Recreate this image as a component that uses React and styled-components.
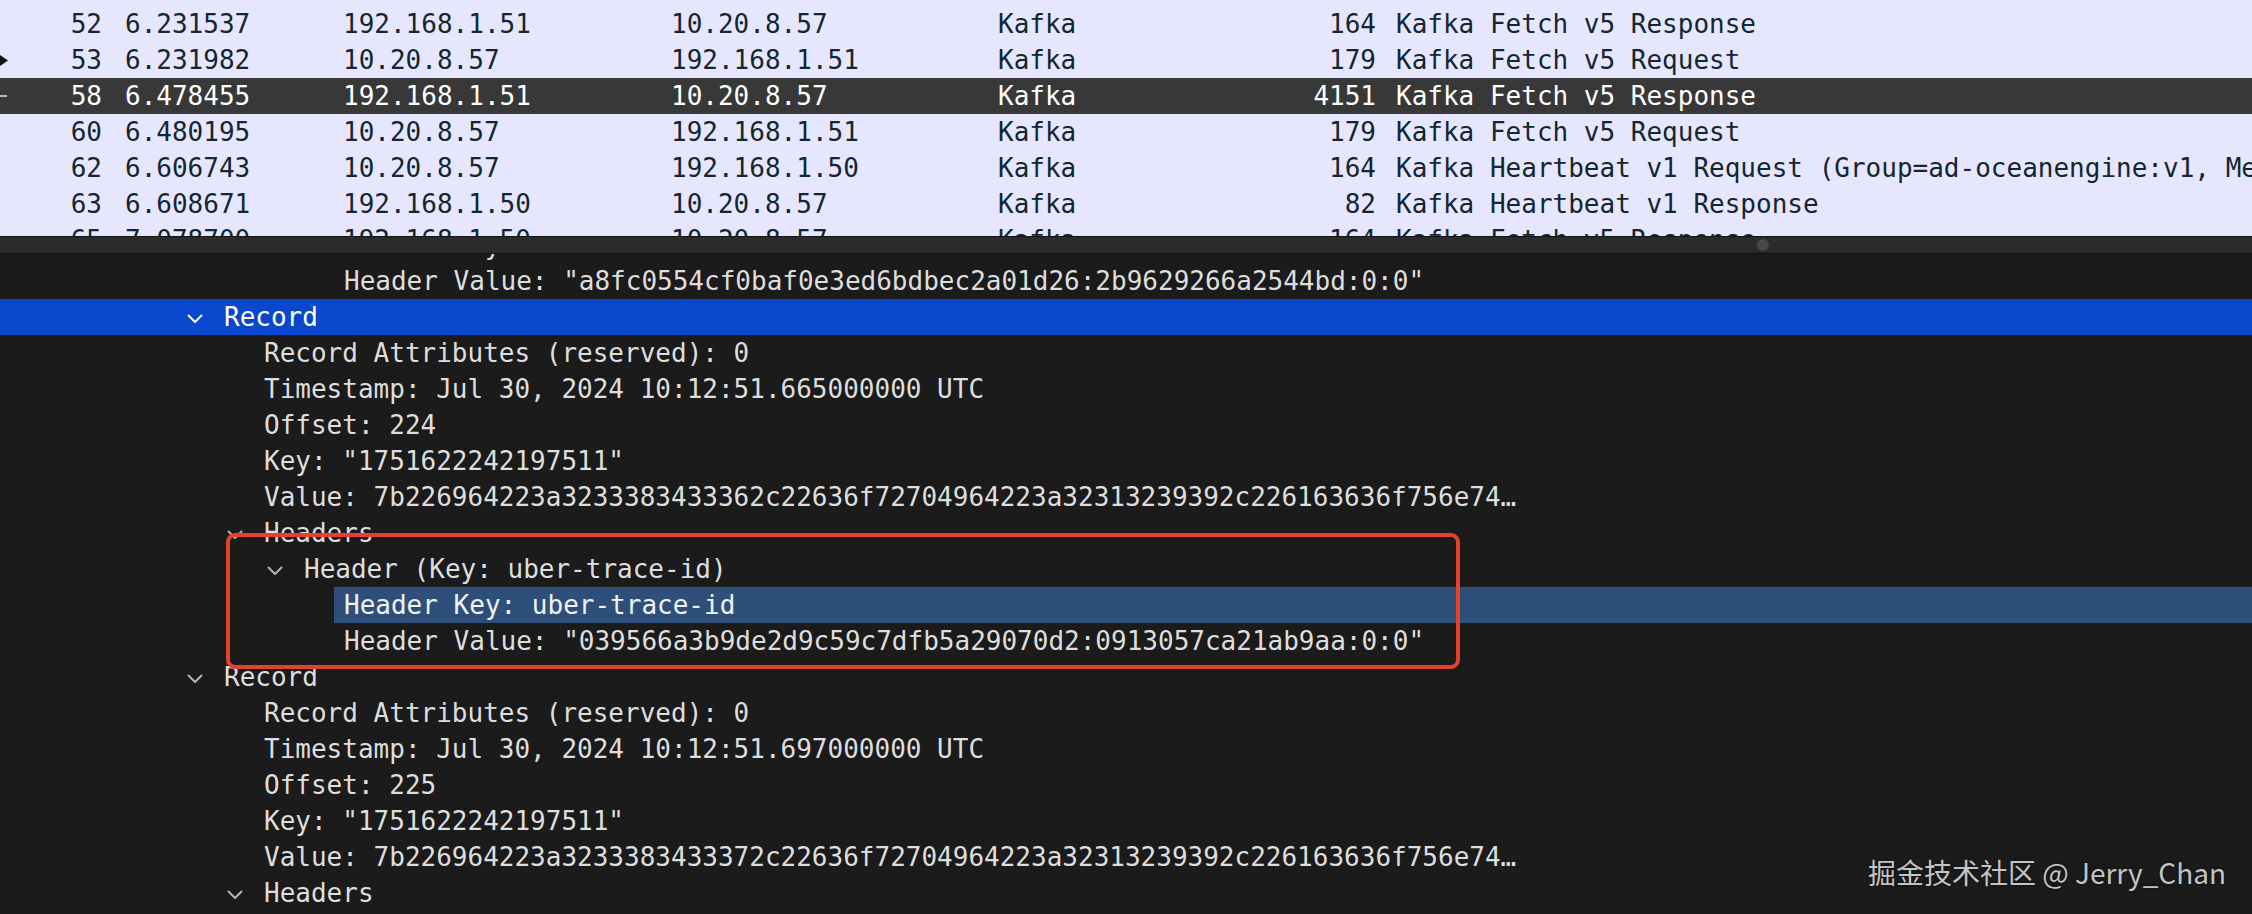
import React from 'react'
import styled, { createGlobalStyle, css } from 'styled-components'

const GlobalStyle = createGlobalStyle`
  html, body {
    margin: 0;
    padding: 0;
    background: #1b1b1b;
    overflow: hidden;
  }
  #root {
    width: 2252px;
    height: 914px;
  }
`

const packets = [
  { no: 52, time: '6.231537', src: '192.168.1.51', dst: '10.20.8.57', proto: 'Kafka', len: 164, info: 'Kafka Fetch v5 Response' },
  { no: 53, time: '6.231982', src: '10.20.8.57', dst: '192.168.1.51', proto: 'Kafka', len: 179, info: 'Kafka Fetch v5 Request', mark: 'request' },
  { no: 58, time: '6.478455', src: '192.168.1.51', dst: '10.20.8.57', proto: 'Kafka', len: 4151, info: 'Kafka Fetch v5 Response', mark: 'current', selected: true },
  { no: 60, time: '6.480195', src: '10.20.8.57', dst: '192.168.1.51', proto: 'Kafka', len: 179, info: 'Kafka Fetch v5 Request' },
  { no: 62, time: '6.606743', src: '10.20.8.57', dst: '192.168.1.50', proto: 'Kafka', len: 164, info: 'Kafka Heartbeat v1 Request (Group=ad-oceanengine:v1, Member=consumer-1)' },
  { no: 63, time: '6.608671', src: '192.168.1.50', dst: '10.20.8.57', proto: 'Kafka', len: 82, info: 'Kafka Heartbeat v1 Response' },
  { no: 65, time: '7.078700', src: '192.168.1.50', dst: '10.20.8.57', proto: 'Kafka', len: 164, info: 'Kafka Fetch v5 Response' },
]

// level 0 = Record, each level indents 40px
const tree = [
  { level: 3, text: 'Header Key: uber-trace-id' },
  { level: 3, text: 'Header Value: "a8fc0554cf0baf0e3ed6bdbec2a01d26:2b9629266a2544bd:0:0"' },
  { level: 0, text: 'Record', open: true, selected: true },
  { level: 1, text: 'Record Attributes (reserved): 0' },
  { level: 1, text: 'Timestamp: Jul 30, 2024 10:12:51.665000000 UTC' },
  { level: 1, text: 'Offset: 224' },
  { level: 1, text: 'Key: "1751622242197511"' },
  { level: 1, text: 'Value: 7b226964223a3233383433362c22636f72704964223a32313239392c226163636f756e74…' },
  { level: 1, text: 'Headers', open: true },
  { level: 2, text: 'Header (Key: uber-trace-id)', open: true },
  { level: 3, text: 'Header Key: uber-trace-id', focus: true },
  { level: 3, text: 'Header Value: "039566a3b9de2d9c59c7dfb5a29070d2:0913057ca21ab9aa:0:0"' },
  { level: 0, text: 'Record', open: true },
  { level: 1, text: 'Record Attributes (reserved): 0' },
  { level: 1, text: 'Timestamp: Jul 30, 2024 10:12:51.697000000 UTC' },
  { level: 1, text: 'Offset: 225' },
  { level: 1, text: 'Key: "1751622242197511"' },
  { level: 1, text: 'Value: 7b226964223a3233383433372c22636f72704964223a32313239392c226163636f756e74…' },
  { level: 1, text: 'Headers', open: true },
]

const Screen = styled.div`
  position: relative;
  width: 2252px;
  height: 914px;
  display: flex;
  flex-direction: column;
  overflow: hidden;
  font-family: "DejaVu Sans Mono", "Liberation Mono", monospace;
  font-size: 26px;
`

const PacketList = styled.div`
  flex: none;
  height: 236px;
  box-sizing: border-box;
  padding-top: 6px;
  background: #e7e6ff;
  overflow: hidden;
`

const PacketRow = styled.div`
  display: grid;
  grid-template-columns: 14px 88px 241px 328px 327px 280px 98px 1fr;
  height: 36px;
  line-height: 36px;
  white-space: nowrap;
  color: ${p => (p.$selected ? '#ffffff' : '#12272e')};
  background: ${p => (p.$selected ? '#383838' : 'transparent')};
`

const Cell = styled.span`
  overflow: hidden;
  text-align: ${p => (p.$right ? 'right' : 'left')};
  padding-left: ${p => p.$pad || 0}px;
`

const MarkCell = styled.span`
  display: flex;
  align-items: center;
`

const Dash = styled.span`
  width: 7px;
  height: 2px;
  background: #b9b9b9;
`

const Splitter = styled.div`
  flex: none;
  height: 18px;
  box-sizing: border-box;
  display: flex;
  align-items: center;
  padding-left: 1757px;
  background: #2b2b2b;
  border-top: 1px solid #141414;
  border-bottom: 1px solid #0f0f0f;
`

const Grip = styled.span`
  width: 12px;
  height: 12px;
  border-radius: 50%;
  background: #474747;
`

const DetailTree = styled.div`
  position: relative;
  flex: 1;
  overflow: hidden;
  background: #1b1b1b;
`

const TreeBody = styled.div`
  margin-top: -27px;
`

const TreeLine = styled.div`
  display: flex;
  align-items: center;
  height: 36px;
  line-height: 36px;
  white-space: nowrap;
  padding-left: ${p => 184 + p.$level * 40}px;
  background: ${p => (p.$selected ? '#0b47cc' : 'transparent')};
  color: ${p => (p.$selected ? '#ffffff' : '#dedede')};
`

const Twisty = styled.span`
  flex: none;
  width: 40px;
  box-sizing: border-box;
  padding-left: 3px;
  padding-top: 3px;
  display: flex;
  align-items: center;
  color: ${p => (p.$selected ? '#ffffff' : '#b4b4b4')};
`

const Label = styled.span`
  flex: 1;
  align-self: stretch;
  ${p =>
    p.$focus &&
    css`
      margin-left: -10px;
      padding-left: 10px;
      background: #2f4f7b;
      color: #f2f2f2;
    `}
`

const Callout = styled.div`
  position: absolute;
  left: 226px;
  top: 279px;
  width: 1234px;
  height: 136px;
  box-sizing: border-box;
  border: 4px solid #e5412d;
  border-radius: 9px;
  pointer-events: none;
`

const Watermark = styled.div`
  position: absolute;
  right: 26px;
  bottom: 26px;
  font-family: "Noto Sans CJK SC", "Noto Sans", sans-serif;
  font-size: 28px;
  line-height: 31px;
  color: #c4c4c4;
  text-shadow: 0 0 3px rgba(0, 0, 0, 0.6);
`

const Chevron = () => (
  <svg width="16" height="10" viewBox="0 0 16 10">
    <polyline points="1.5,1.5 8,8 14.5,1.5" fill="none" stroke="currentColor" strokeWidth="2" strokeLinecap="round" strokeLinejoin="round" />
  </svg>
)

const RequestArrow = () => (
  <svg width="8" height="11" viewBox="0 0 8 11">
    <polygon points="0,0 8,5.5 0,11" fill="#111" />
  </svg>
)

export default function App() {
  return (
    <>
      <GlobalStyle />
      <Screen>
        <PacketList>
          {packets.map(p => (
            <PacketRow key={p.no} $selected={p.selected}>
              <MarkCell>
                {p.mark === 'request' && <RequestArrow />}
                {p.mark === 'current' && <Dash />}
              </MarkCell>
              <Cell $right>{p.no}</Cell>
              <Cell $pad={23}>{p.time}</Cell>
              <Cell>{p.src}</Cell>
              <Cell>{p.dst}</Cell>
              <Cell>{p.proto}</Cell>
              <Cell $right>{p.len}</Cell>
              <Cell $pad={20}>{p.info}</Cell>
            </PacketRow>
          ))}
        </PacketList>
        <Splitter>
          <Grip />
        </Splitter>
        <DetailTree>
          <TreeBody>
            {tree.map((n, i) => (
              <TreeLine key={i} $level={n.level} $selected={n.selected}>
                <Twisty $selected={n.selected}>{n.open && <Chevron />}</Twisty>
                <Label $focus={n.focus}>{n.text}</Label>
              </TreeLine>
            ))}
          </TreeBody>
          <Callout />
        </DetailTree>
        <Watermark>掘金技术社区 @ Jerry_Chan</Watermark>
      </Screen>
    </>
  )
}
